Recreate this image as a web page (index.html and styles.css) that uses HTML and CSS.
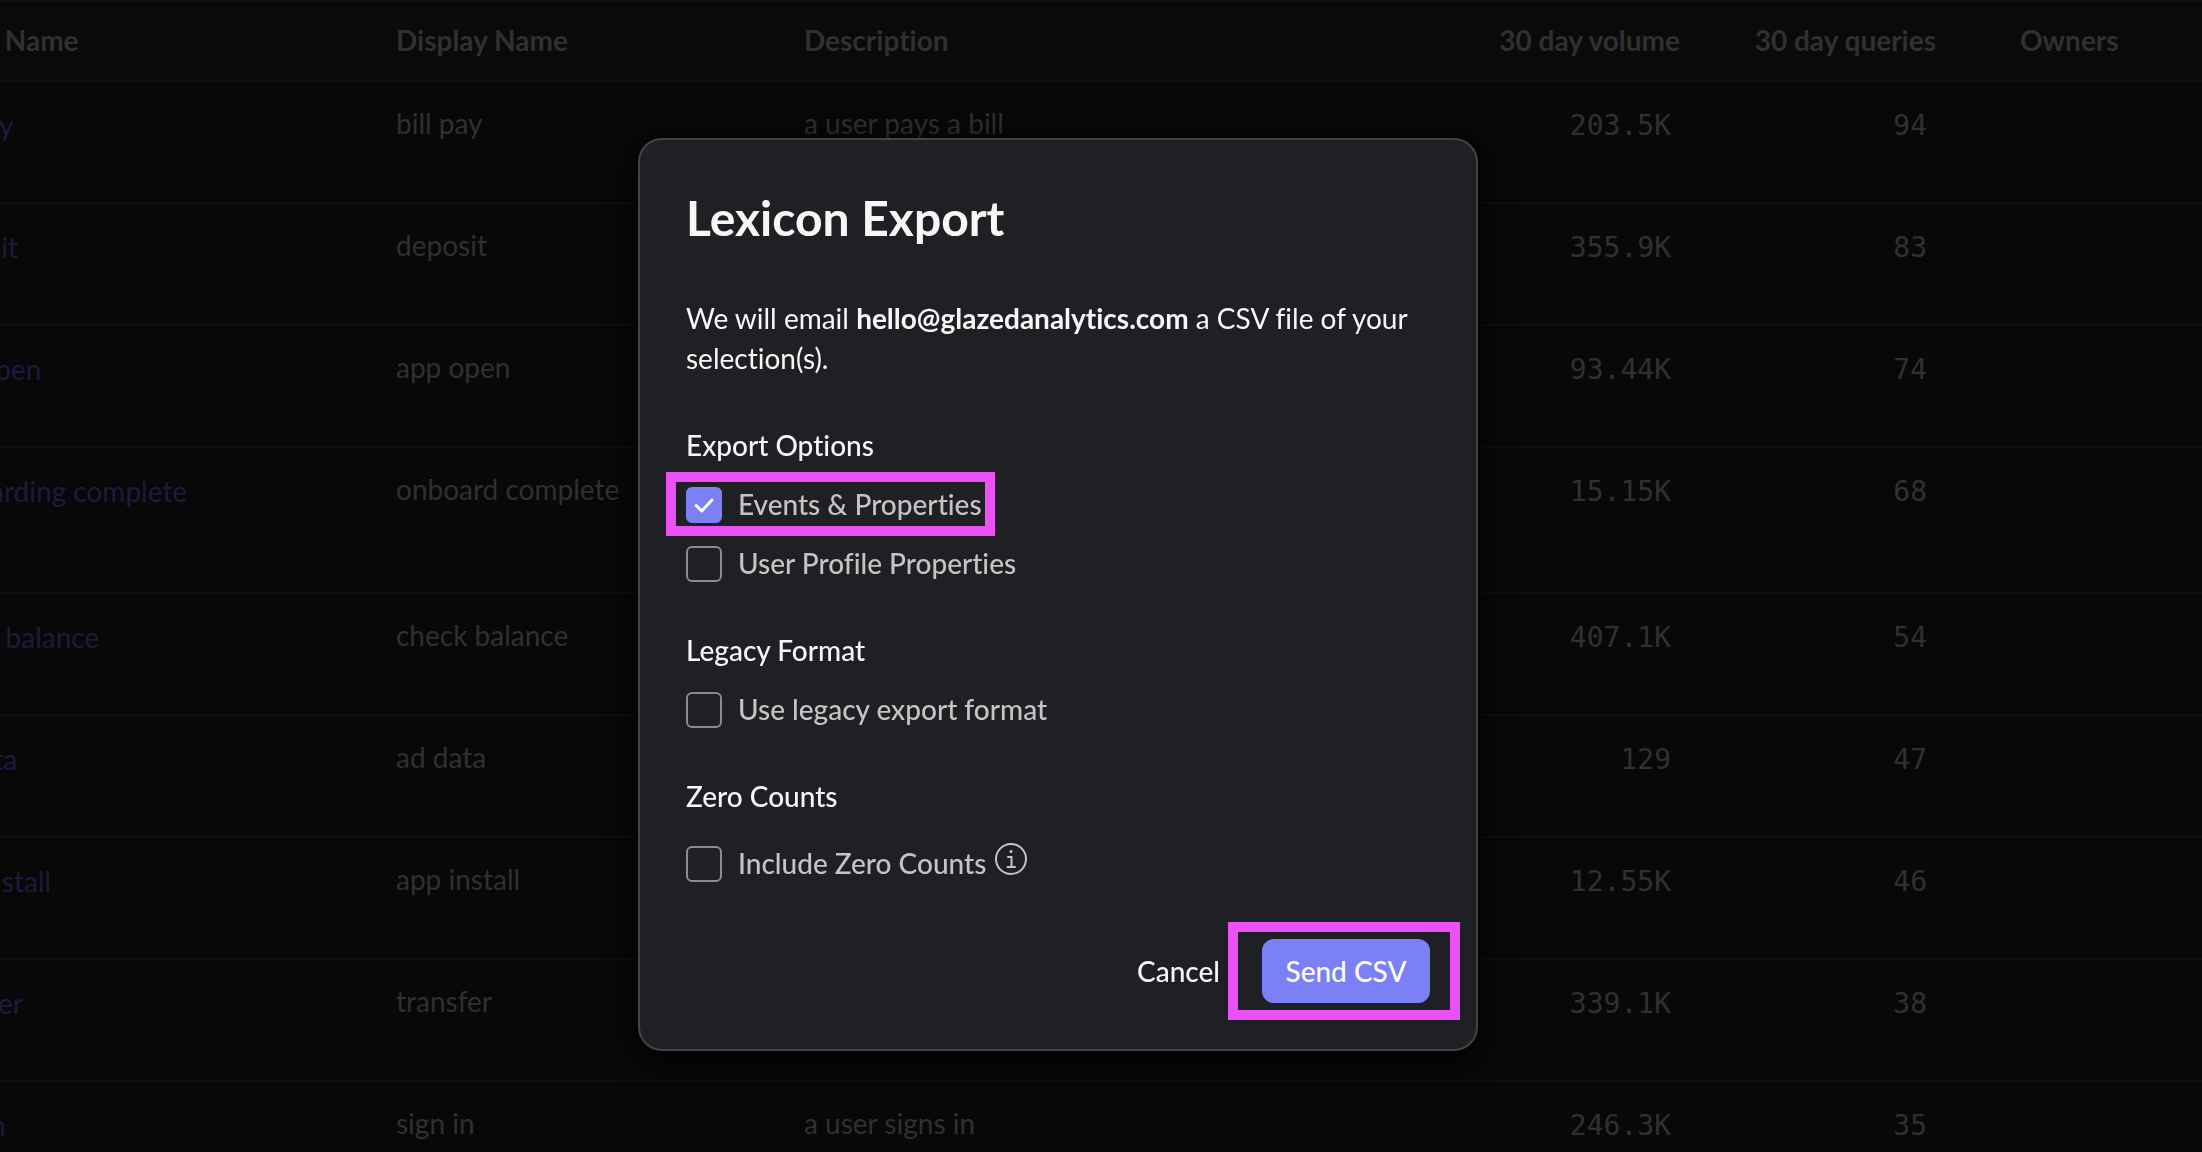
FILE: index.html
```html
<!DOCTYPE html>
<html lang="en">
<head>
<meta charset="utf-8">
<title>Lexicon Export</title>
<link rel="stylesheet" href="styles.css">
</head>
<body>
<main class="page">
  <table class="lexicon">
    <colgroup>
      <col class="col-name"><col class="col-display"><col class="col-description"><col class="col-volume"><col class="col-queries"><col class="col-owners">
    </colgroup>
    <thead>
      <tr><th>Event Name</th><th>Display Name</th><th>Description</th><th class="num">30 day volume</th><th class="num">30 day queries</th><th class="owners">Owners</th></tr>
    </thead>
    <tbody>
      <tr><td><a href="#">bill pay</a></td><td>bill pay</td><td>a user pays a bill</td><td class="num">203.5K</td><td class="num">94</td><td></td></tr>
      <tr><td><a href="#">deposit</a></td><td>deposit</td><td></td><td class="num">355.9K</td><td class="num">83</td><td></td></tr>
      <tr><td><a href="#">app open</a></td><td>app open</td><td></td><td class="num">93.44K</td><td class="num">74</td><td></td></tr>
      <tr class="tall"><td><a href="#">onboarding complete</a></td><td>onboard complete</td><td></td><td class="num">15.15K</td><td class="num">68</td><td></td></tr>
      <tr><td><a href="#">check balance</a></td><td>check balance</td><td></td><td class="num">407.1K</td><td class="num">54</td><td></td></tr>
      <tr><td><a href="#">ad data</a></td><td>ad data</td><td></td><td class="num">129</td><td class="num">47</td><td></td></tr>
      <tr><td><a href="#">app install</a></td><td>app install</td><td></td><td class="num">12.55K</td><td class="num">46</td><td></td></tr>
      <tr><td><a href="#">transfer</a></td><td>transfer</td><td></td><td class="num">339.1K</td><td class="num">38</td><td></td></tr>
      <tr><td><a href="#">sign in</a></td><td>sign in</td><td>a user signs in</td><td class="num">246.3K</td><td class="num">35</td><td></td></tr>
    </tbody>
  </table>
</main>

<div class="overlay">
  <form class="dialog" role="dialog" aria-labelledby="dialog-title">
    <h1 class="title" id="dialog-title">Lexicon Export</h1>
    <p class="intro">We will email <strong>hello@glazedanalytics.com</strong> a CSV file of your selection(s).</p>

    <section class="group">
      <h2 class="group-title">Export Options</h2>
      <div class="options">
        <label class="option highlight"><input class="box" type="checkbox" checked><span>Events &amp; Properties</span></label>
        <label class="option"><input class="box" type="checkbox"><span>User Profile Properties</span></label>
      </div>
    </section>

    <section class="group">
      <h2 class="group-title">Legacy Format</h2>
      <div class="options">
        <label class="option"><input class="box" type="checkbox"><span>Use legacy export format</span></label>
      </div>
    </section>

    <section class="group">
      <h2 class="group-title">Zero Counts</h2>
      <div class="options options-hint">
        <label class="option"><input class="box" type="checkbox"><span>Include Zero Counts</span></label>
        <svg class="info" viewBox="0 0 32 32" fill="none" stroke="currentColor" stroke-width="2" stroke-linecap="round" aria-hidden="true">
          <circle cx="16" cy="16" r="15"/>
          <path d="M13 14h3.500v10M12.500 24h7.500"/>
          <circle cx="16" cy="8.500" r="1.500" fill="currentColor" stroke="none"/>
        </svg>
      </div>
    </section>

    <footer class="actions">
      <button class="button cancel" type="button">Cancel</button>
      <div class="send-wrap highlight"><button class="button send" type="submit">Send CSV</button></div>
    </footer>
  </form>
</div>
</body>
</html>
```
FILE: styles.css
```css
* {
  box-sizing: border-box;
}

html,
body {
  margin: 0;
  height: 100%;
  overflow: hidden;
}

body {
  background: #080808;
  color: #303030;
  font-family: Lato, "Open Sans", sans-serif;
  font-size: 28px;
  line-height: 40px;
  font-variant-ligatures: none;
}

/* Lexicon table, scrolled sideways under the dialog */
.page {
  margin-left: -73px;
}

.lexicon {
  width: 100%;
  table-layout: fixed;
  border-collapse: separate;
  border-spacing: 0;
  border-top: 2px solid #0f0f0f;
}

.col-name { width: 469px; }
.col-display { width: 408px; }
.col-volume { width: 256px; }
.col-queries { width: 256px; }
.col-owners { width: 266px; }

.lexicon th,
.lexicon td {
  padding: 0;
  border-bottom: 2px solid #0f0f0f;
  text-align: left;
  vertical-align: top;
  white-space: nowrap;
}

.lexicon th {
  height: 80px;
  padding-top: 18px;
  background: #0a0a0a;
  font-weight: 700;
}

.lexicon td {
  height: 122px;
  padding-top: 21px;
}

.lexicon td:first-child {
  padding-top: 23px;
}

.lexicon .tall td {
  height: 146px;
}

.lexicon a {
  color: #1c1b3d;
  text-decoration: none;
}

.lexicon .num {
  text-align: right;
}

.lexicon td.num {
  padding-top: 24px;
  padding-right: 9px;
  font-family: "DejaVu Sans Mono", monospace;
}

.lexicon .owners {
  padding-left: 84px;
}

/* Dialog */
.overlay {
  position: fixed;
  inset: 0;
  display: flex;
  align-items: center;
  justify-content: center;
  padding: 36px 86px 0 0;
}

.dialog {
  width: 840px;
  padding: 50px 46px 46px;
  border: 2px solid #434448;
  border-radius: 24px;
  background: #1f2024;
  color: #f7f7f7;
  box-shadow: 0 8px 32px #000000;
}

.title {
  margin: 0 0 52px;
  font-size: 48px;
  line-height: 56px;
  font-weight: 700;
}

.intro {
  margin: 0 0 47px;
}

.group {
  margin-bottom: 48px;
}

.group-title {
  margin: 0 0 22px;
  font-size: 28px;
  line-height: 40px;
  font-weight: 500;
}

.options {
  display: flex;
  flex-direction: column;
  align-items: flex-start;
  gap: 23px;
  color: #c4c4c4;
}

.options-hint {
  flex-direction: row;
  gap: 9px;
  padding-top: 8px;
}

.option {
  position: relative;
  display: flex;
  align-items: flex-start;
  gap: 16px;
  line-height: 34px;
  font-weight: 500;
}

.box {
  appearance: none;
  width: 36px;
  height: 36px;
  margin: 0;
  border: 2px solid #8b8b8d;
  border-radius: 6px;
}

.box:checked {
  border-color: #7b80f7;
  background: #7b80f7 url("data:image/svg+xml,%3Csvg xmlns='http://www.w3.org/2000/svg' viewBox='0 0 32 32' fill='none' stroke='white' stroke-width='3' stroke-linecap='round' stroke-linejoin='round'%3E%3Cpath d='M8.200 16.500l5.500 5.500L24 11'/%3E%3C/svg%3E") center / 32px 32px no-repeat;
}

.info {
  width: 32px;
  height: 32px;
  margin-top: -3px;
}

.actions {
  display: flex;
  align-items: center;
  justify-content: flex-end;
  gap: 42px;
  margin-top: 57px;
}

.button {
  height: 64px;
  padding: 0;
  border: 0;
  border-radius: 12px;
  background: none;
  color: #f7f7f7;
  font: inherit;
  font-weight: 500;
}

.send-wrap {
  position: relative;
}

.send {
  display: block;
  width: 168px;
  background: #7b80f7;
  color: #ffffff;
}

/* Callout frames drawn over the controls */
.highlight::after {
  content: "";
  position: absolute;
  border: 10px solid #ec50f7;
  pointer-events: none;
}

.option.highlight::after {
  inset: -15px -13px -13px -20px;
}

.send-wrap.highlight::after {
  inset: -17px -30px -17px -34px;
}
```
